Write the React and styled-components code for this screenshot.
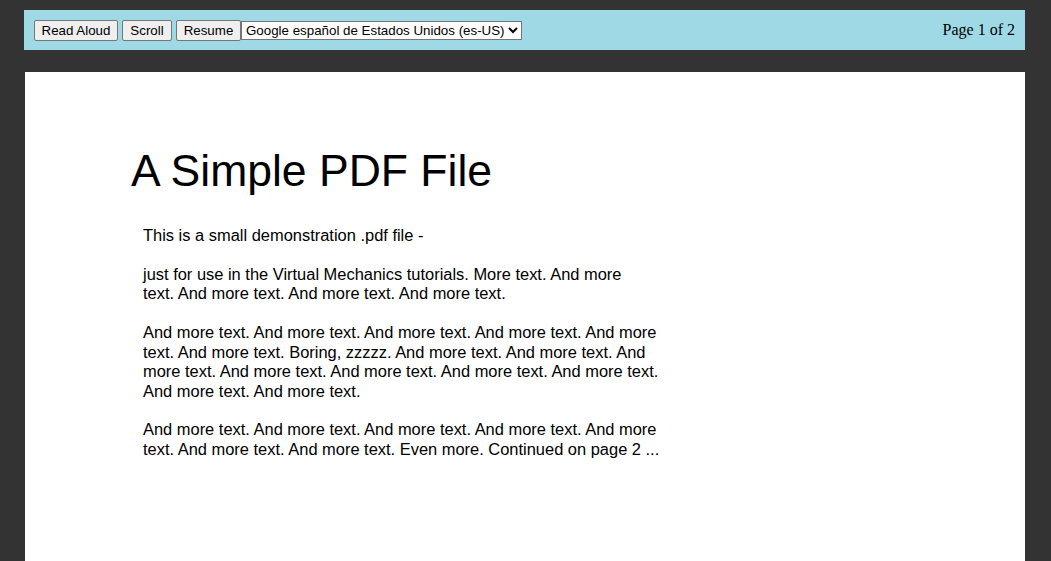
import React from "react";
import styled, { createGlobalStyle } from "styled-components";

const GlobalStyle = createGlobalStyle`
  html, body {
    margin: 0;
    padding: 0;
    background-color: #333333;
    overflow: hidden;
  }
`;

const Viewer = styled.div`
  min-height: 561px;
  padding: 10px 26px 0 24px;
  display: flex;
  flex-direction: column;
  box-sizing: border-box;
`;

const Toolbar = styled.div`
  height: 40px;
  background-color: #9fd9e6;
  display: flex;
  align-items: center;
  padding: 0 10px;
`;

const Controls = styled.div`
  display: flex;
  align-items: center;
  gap: 4px;
  flex: 1;
`;

const Button = styled.button`
  font-family: "Liberation Sans", Arial, sans-serif;
  font-size: 13.33px;
  color: #000;
  background-color: #efefef;
  border: 1px solid #767676;
  border-radius: 2px;
  padding: 1px 6px;
  min-width: ${(p) => p.$min || 0}px;
  height: 21px;
  margin-top: 1px;
`;

const VoiceSelect = styled.select`
  font-family: "Liberation Sans", Arial, sans-serif;
  font-size: 13.33px;
  color: #000;
  background-color: #fff;
  border: 1px solid #767676;
  border-radius: 0;
  height: 19px;
  margin-left: -4px;
`;

const PageCount = styled.div`
  font-family: "Liberation Serif", "Times New Roman", serif;
  font-size: 16px;
  color: #000;
  margin-top: -1px;
`;

const Page = styled.div`
  margin-top: 22px;
  margin-left: 1px;
  flex: 1;
  background-color: #fff;
  padding: 73px 0 0 106px;
  min-height: 489px;
  box-sizing: border-box;
  font-family: "Liberation Sans", Arial, sans-serif;
  color: #000;
`;

const Title = styled.h1`
  margin: 0 0 29px;
  font-size: 44.5px;
  font-weight: normal;
  line-height: 52px;
`;

const Body = styled.div`
  padding-left: 12px;
  font-size: 16.45px;
  line-height: 19.45px;
`;

const Paragraph = styled.p`
  margin: 0 0 19.45px;
  white-space: nowrap;
`;

const paragraphs = [
  ["This is a small demonstration .pdf file -"],
  [
    "just for use in the Virtual Mechanics tutorials. More text. And more",
    "text. And more text. And more text. And more text.",
  ],
  [
    "And more text. And more text. And more text. And more text. And more",
    "text. And more text. Boring, zzzzz. And more text. And more text. And",
    "more text. And more text. And more text. And more text. And more text.",
    "And more text. And more text.",
  ],
  [
    "And more text. And more text. And more text. And more text. And more",
    "text. And more text. And more text. Even more. Continued on page 2 ...",
  ],
];

const App = () => {
  return (
    <Viewer>
      <GlobalStyle />
      <Toolbar>
        <Controls>
          <Button $min={84}>Read Aloud</Button>
          <Button $min={50}>Scroll</Button>
          <Button $min={65}>Resume</Button>
          <VoiceSelect defaultValue="es-US">
            <option value="es-US">Google español de Estados Unidos (es-US)</option>
          </VoiceSelect>
        </Controls>
        <PageCount>Page 1 of 2</PageCount>
      </Toolbar>
      <Page>
        <Title>A Simple PDF File</Title>
        <Body>
          {paragraphs.map((lines, i) => (
            <Paragraph key={i}>
              {lines.map((line, j) => (
                <React.Fragment key={j}>
                  {j > 0 && <br />}
                  {line}
                </React.Fragment>
              ))}
            </Paragraph>
          ))}
        </Body>
      </Page>
    </Viewer>
  );
};

export default App;
